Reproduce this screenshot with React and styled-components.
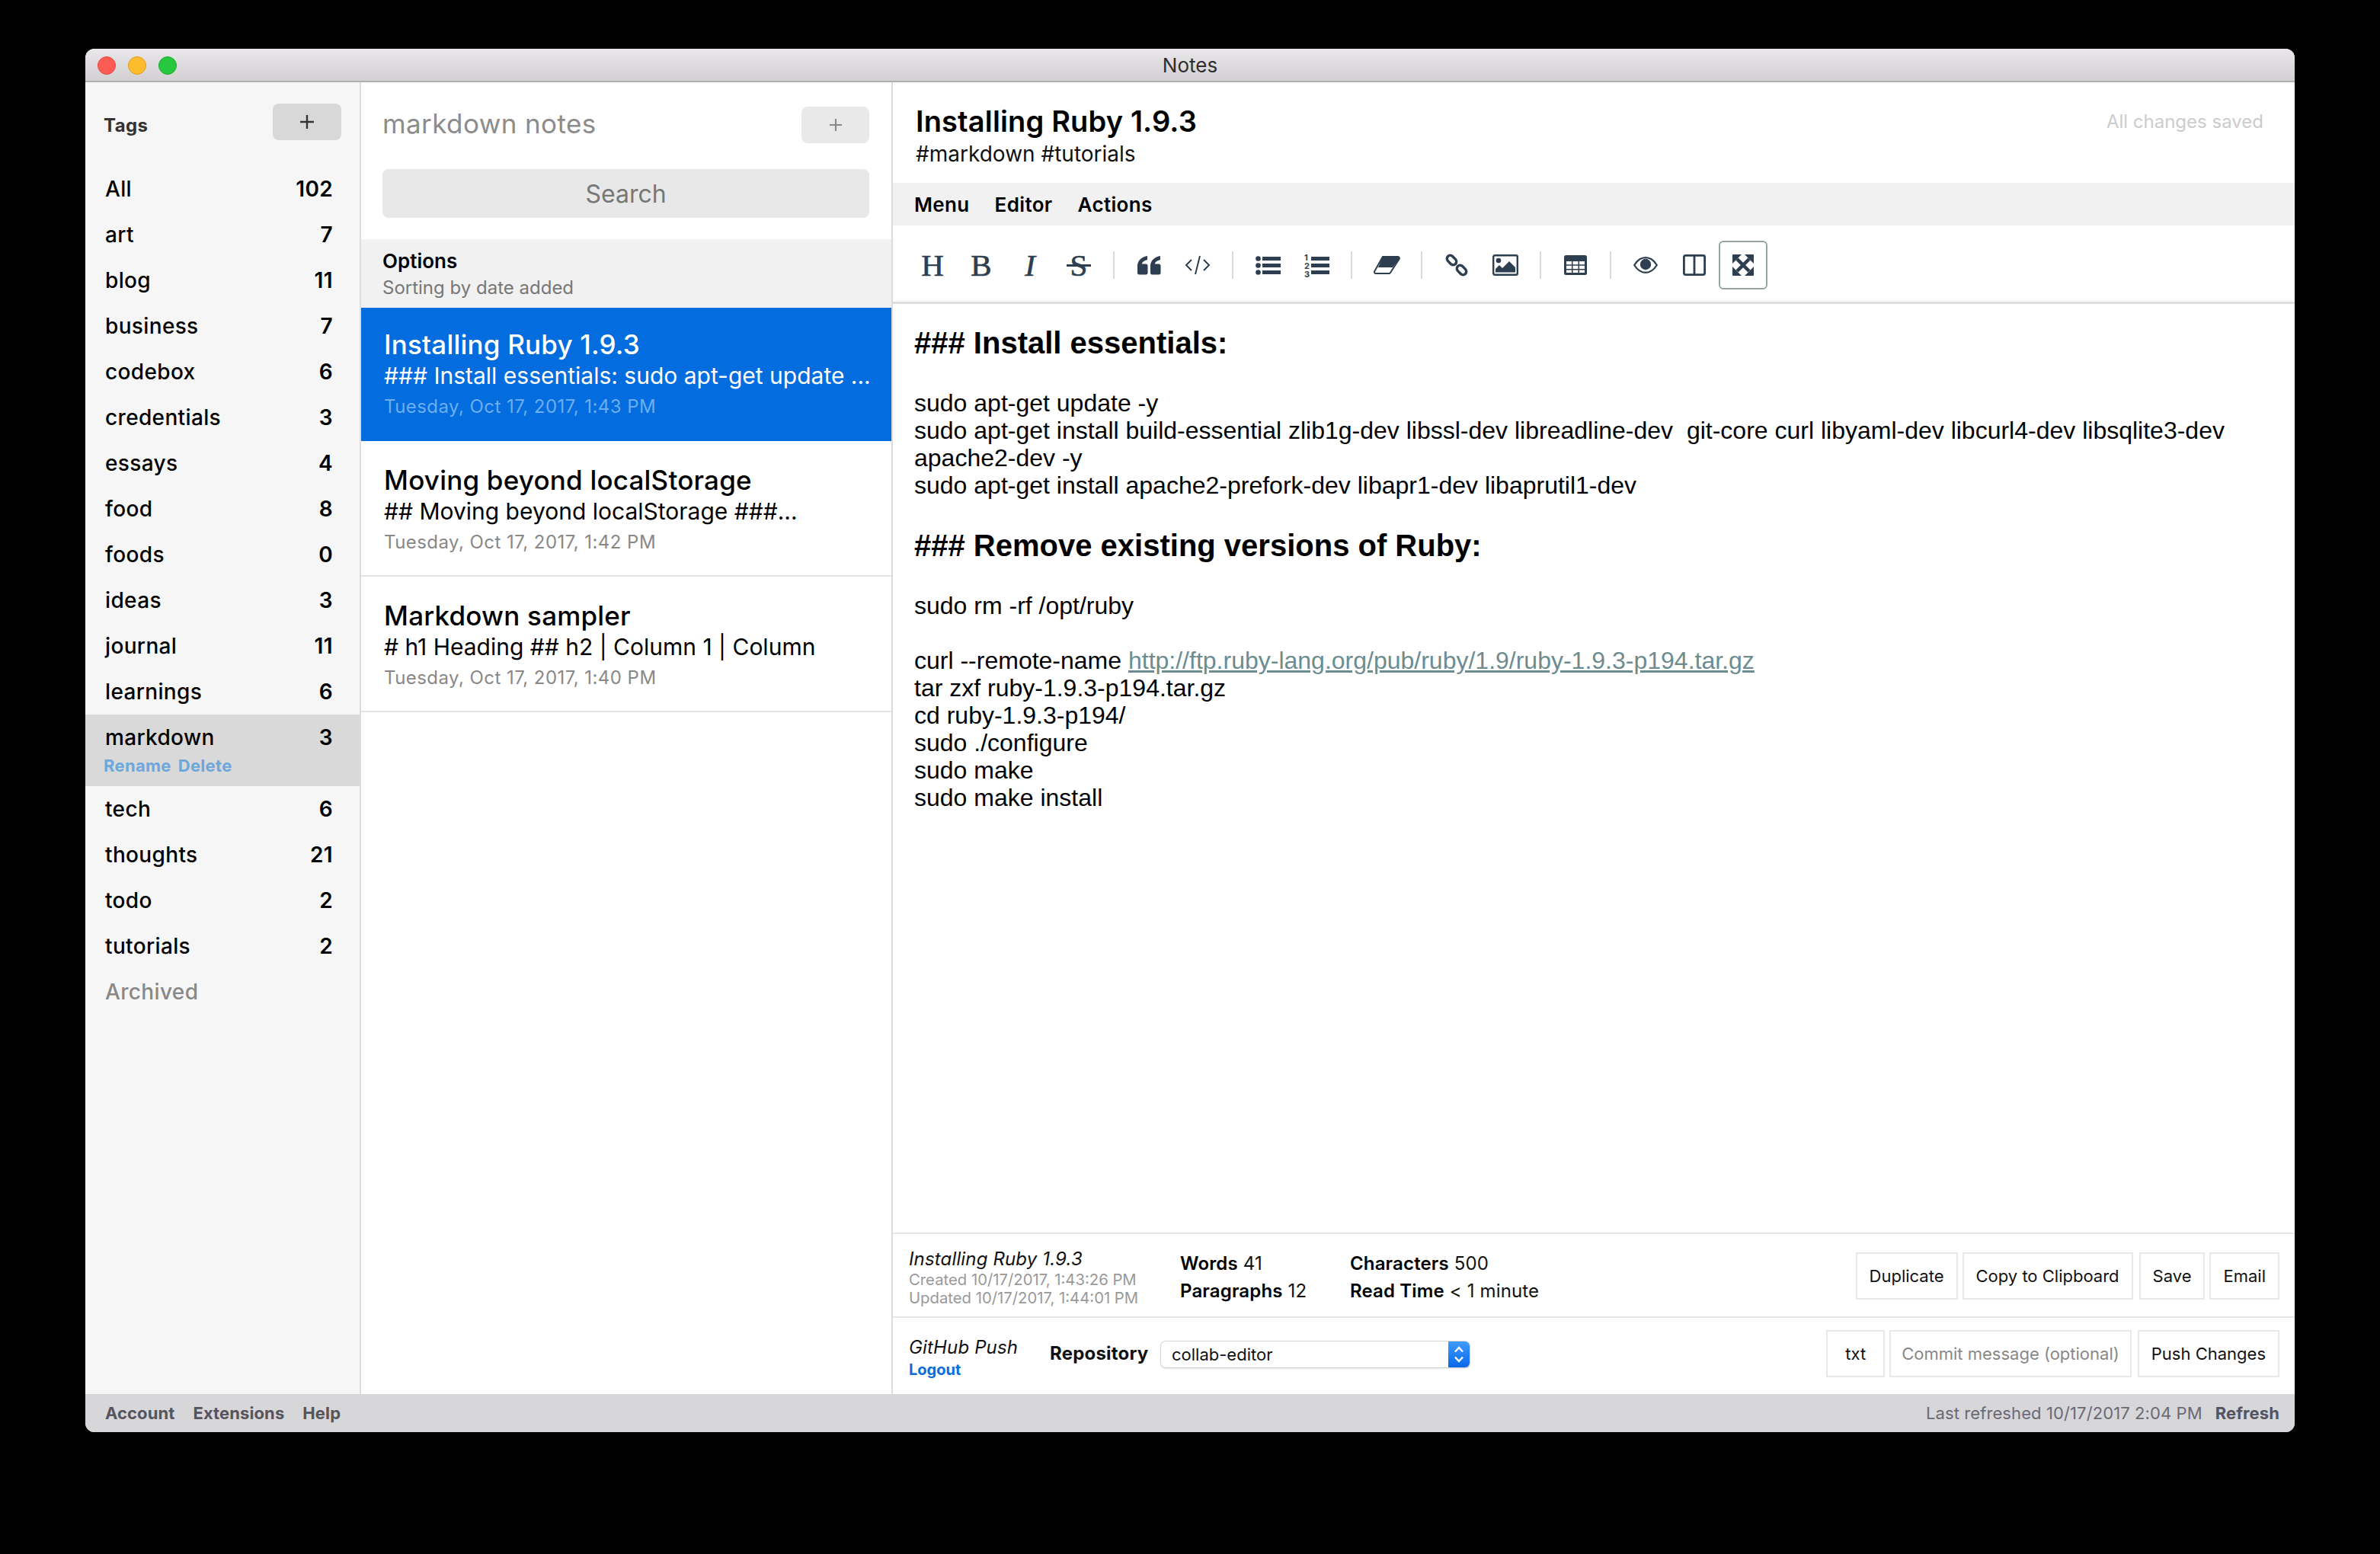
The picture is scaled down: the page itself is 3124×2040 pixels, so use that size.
import React from "react";
import styled, { createGlobalStyle } from "styled-components";

const GlobalStyle = createGlobalStyle`
  html, body {
    margin: 0;
    padding: 0;
    background: #000;
  }
  * {
    box-sizing: border-box;
  }
`;

const SANS = `Inter, "Noto Sans", sans-serif`;
const ICON = "#2c3e50";

const Page = styled.div`
  width: 3124px;
  height: 2040px;
  padding: 64px 112px 160px;
  background: #000;
  font-family: ${SANS};
`;
const Window = styled.div`
  height: 1816px;
  display: flex;
  flex-direction: column;
  border-radius: 12px;
  overflow: hidden;
  background: #fff;
`;
const TitleBar = styled.div`
  position: relative;
  flex: 0 0 44px;
  display: flex;
  align-items: center;
  justify-content: center;
  background: linear-gradient(#e9e7e9, #d2d0d2);
  border-bottom: 2px solid #b2afb2;
  font-size: 26px;
  color: #2e2e2e;
`;
const Lights = styled.div`
  position: absolute;
  left: 16px;
  top: 10px;
  display: flex;
  gap: 16px;
`;
const Light = styled.span`
  width: 24px;
  height: 24px;
  border-radius: 50%;
  background: ${(p) => p.$color};
  border: 1px solid ${(p) => p.$edge};
`;
const Columns = styled.div`
  flex: 1;
  display: flex;
  min-height: 0;
`;

/* tags column */
const Sidebar = styled.div`
  flex: 0 0 362px;
  background: #f6f6f6;
  border-right: 2px solid #dcdcdc;
`;
const SidebarHead = styled.div`
  height: 110px;
  padding: 28px 24px 0 24px;
  display: flex;
  justify-content: space-between;
  align-items: flex-start;
`;
const TagsLabel = styled.div`
  margin-top: 14px;
  font-size: 24px;
  font-weight: 700;
  letter-spacing: 0.4px;
  color: #333;
`;
const AddButton = styled.div`
  width: ${(p) => (p.$light ? "89px" : "90px")};
  height: 48px;
  border-radius: 8px;
  display: flex;
  align-items: center;
  justify-content: center;
  background: ${(p) => (p.$light ? "#e9e9e9" : "#d8d8d8")};
  color: ${(p) => (p.$light ? "#888" : "#333")};
`;
const Tag = styled.div`
  padding: 0 35px 0 26px;
  height: ${(p) => (p.$selected ? "94px" : "60px")};
  background: ${(p) => (p.$selected ? "#d9d9d9" : "transparent")};
`;
const TagRow = styled.div`
  height: 60px;
  display: flex;
  justify-content: space-between;
  align-items: center;
  font-size: 28px;
  font-weight: 500;
  letter-spacing: 0.35px;
  color: ${(p) => (p.$muted ? "#888" : "#000")};
`;
const TagActions = styled.div`
  margin: -6px 0 0 -2px;
  display: flex;
  gap: 9px;
  font-size: 22px;
  font-weight: 700;
  color: #6ea7dc;
  letter-spacing: 0.3px;
`;
const Count = styled.span`
  font-weight: 600;
`;

/* notes column */
const NotesPane = styled.div`
  flex: 0 0 698px;
  border-right: 2px solid #dcdcdc;
  display: flex;
  flex-direction: column;
`;
const NotesHead = styled.div`
  height: 80px;
  padding: 32px 29px 0 28px;
  display: flex;
  justify-content: space-between;
  align-items: flex-start;
`;
const NotesTitle = styled.div`
  font-size: 35px;
  line-height: 44px;
  letter-spacing: 0.4px;
  color: #8c8c8c;
`;
const SearchBox = styled.div`
  margin: 34px 29px 28px 28px;
  height: 64px;
  border-radius: 8px;
  background: #e8e8e8;
  display: flex;
  align-items: center;
  justify-content: center;
  font-size: 32px;
  color: #777;
`;
const OptionsBand = styled.div`
  height: 90px;
  padding: 13px 28px 0;
  background: #f1f1f1;
`;
const OptionsTitle = styled.div`
  font-size: 26px;
  line-height: 32px;
  font-weight: 600;
  color: #000;
`;
const OptionsHint = styled.div`
  font-size: 24px;
  line-height: 38px;
  color: #777;
`;
const Note = styled.div`
  height: ${(p) => (p.$active ? "175px" : "178px")};
  padding: ${(p) => (p.$active ? "27px" : "30px")} 16px 0 30px;
  background: ${(p) => (p.$active ? "#036cdf" : "#fff")};
  border-bottom: 2px solid ${(p) => (p.$active ? "#036cdf" : "#e4e4e4")};
`;
const NoteTitle = styled.div`
  font-size: 35px;
  line-height: 42px;
  font-weight: 500;
  letter-spacing: 0.2px;
  color: ${(p) => (p.$active ? "#fff" : "#000")};
`;
const NoteText = styled.div`
  font-size: 30px;
  line-height: 40px;
  white-space: nowrap;
  color: ${(p) => (p.$active ? "#fff" : "#000")};
`;
const NoteDate = styled.div`
  margin-top: 1px;
  font-size: 24px;
  line-height: 40px;
  letter-spacing: 0.45px;
  color: ${(p) => (p.$active ? "#6caef0" : "#888")};
`;

/* editor column */
const EditorPane = styled.div`
  flex: 1;
  min-width: 0;
  display: flex;
  flex-direction: column;
`;
const EditorHead = styled.div`
  height: 132px;
  padding: 26px 41px 0 30px;
  display: flex;
  justify-content: space-between;
  align-items: flex-start;
`;
const EditorTitle = styled.div`
  font-size: 38px;
  line-height: 50px;
  font-weight: 600;
  letter-spacing: 0.15px;
  color: #000;
`;
const EditorTags = styled.div`
  font-size: 28px;
  line-height: 36px;
  color: #111;
`;
const SavedLabel = styled.div`
  margin-top: 10px;
  font-size: 24px;
  line-height: 32px;
  color: #ccc;
`;
const MenuBar = styled.div`
  height: 56px;
  padding: 0 28px;
  display: flex;
  align-items: center;
  gap: 33px;
  background: #f1f1f1;
  font-size: 26px;
  font-weight: 600;
  letter-spacing: 0.35px;
  color: #000;
`;
const Toolbar = styled.div`
  height: 103px;
  padding: 20px 20px 0;
  display: flex;
  align-items: flex-start;
  border-bottom: 3px solid #dedede;
`;
const ToolButton = styled.div`
  position: relative;
  width: 64px;
  height: 64px;
  display: flex;
  align-items: center;
  justify-content: center;
  color: ${ICON};
  border: 2px solid ${(p) => (p.$on ? "#95a5a6" : "transparent")};
  border-radius: 6px;
`;
const ToolDivider = styled.div`
  width: 28px;
  height: 64px;
  display: flex;
  justify-content: center;
  align-items: center;
  &::after {
    content: "";
    width: 2px;
    height: 36px;
    background: #d9d9d9;
  }
`;
const SerifGlyph = styled.span`
  font-family: "Liberation Serif", serif;
  font-size: 41px;
  line-height: 1;
  font-weight: 400;
  font-style: ${(p) => (p.$italic ? "italic" : "normal")};
  -webkit-text-stroke: 0.7px ${ICON};
  color: ${ICON};
`;
const StrikeLine = styled.span`
  position: absolute;
  left: 14px;
  right: 14px;
  top: 29px;
  height: 3px;
  background: ${ICON};
`;
const Body = styled.div`
  flex: 1;
  padding: 33px 30px 0 28px;
  font-family: "Liberation Sans", Arial, sans-serif;
  font-size: 32px;
  line-height: 36px;
  color: #000;
`;
const BodyHeading = styled.div`
  font-size: 40px;
  font-weight: 700;
  margin-bottom: 43px;
  &:not(:first-child) {
    margin-top: 43px;
  }
`;
const BodyLine = styled.div`
  min-height: 36px;
  white-space: pre-wrap;
`;
const BodyLink = styled.span`
  color: #6d8c8f;
  text-decoration: underline;
`;
const InfoRow = styled.div`
  height: ${(p) => p.$height}px;
  border-top: 2px solid #e6e6e6;
  padding: ${(p) => p.$top}px 20px 0 21px;
  display: flex;
  align-items: flex-start;
`;
const MetaBlock = styled.div`
  width: 356px;
  padding-top: 6px;
`;
const MetaTitle = styled.div`
  font-size: 24px;
  line-height: 30px;
  font-style: italic;
  letter-spacing: 0.15px;
  color: #111;
`;
const MetaDate = styled.div`
  font-size: 20.3px;
  line-height: 24px;
  color: #999;
`;
const StatColumn = styled.div`
  width: ${(p) => p.$width}px;
  padding-top: 15px;
  display: flex;
  flex-direction: column;
  gap: 12px;
  font-size: 24px;
  line-height: 24px;
  letter-spacing: 0.15px;
  color: #111;
  b {
    font-weight: 600;
    color: #000;
  }
`;
const Actions = styled.div`
  margin-left: auto;
  display: flex;
  gap: 6px;
  padding-top: ${(p) => p.$top}px;
`;
const OutlineButton = styled.div`
  height: 62px;
  margin-left: ${(p) => p.$offset || 0}px;
  padding: 0 ${(p) => p.$pad || 16}px;
  border: 2px solid #e8e8e8;
  display: flex;
  align-items: center;
  font-size: 22px;
  color: ${(p) => (p.$muted ? "#888" : "#111")};
`;
const PushBlock = styled.div`
  width: 185px;
  padding-top: 10px;
`;
const LogoutLink = styled.div`
  margin-top: 2px;
  font-size: 20px;
  line-height: 24px;
  font-weight: 700;
  color: #0a6dd8;
`;
const RepoLabel = styled.div`
  width: 146px;
  margin-top: 18px;
  font-size: 24px;
  line-height: 30px;
  font-weight: 700;
  letter-spacing: 0.2px;
  color: #111;
`;
const SelectBox = styled.div`
  margin-top: 17px;
  width: 405px;
  height: 34px;
  display: flex;
  align-items: center;
  justify-content: space-between;
  padding-left: 14px;
  border-radius: 6px;
  background: #fff;
  box-shadow: 0 0 0 1px #d5d5d5, 0 1px 2px rgba(0, 0, 0, 0.3);
  font-size: 22px;
  color: #111;
  overflow: hidden;
`;
const SelectArrows = styled.div`
  width: 28px;
  height: 34px;
  display: flex;
  align-items: center;
  justify-content: center;
  background: linear-gradient(#3f9bfc, #0a68e8);
`;

/* status bar */
const StatusBar = styled.div`
  flex: 0 0 50px;
  padding: 0 20px 0 26px;
  display: flex;
  align-items: center;
  background: #d7d6d9;
  font-size: 22px;
  color: #55545f;
`;
const StatusLink = styled.span`
  font-weight: 700;
  margin-right: 24px;
  letter-spacing: 0.1px;
  &:last-child {
    margin-right: 0;
  }
`;
const StatusSpacer = styled.div`
  flex: 1;
`;
const Refreshed = styled.span`
  margin-right: 17px;
  letter-spacing: 0.1px;
  color: #6a6a76;
`;

const PlusIcon = ({ size = 20, weight = 2.4 }) => (
  <svg width={size} height={size} viewBox="0 0 20 20" fill="none" stroke="currentColor" strokeWidth={weight}>
    <path d="M10 1v18M1 10h18" />
  </svg>
);

const QuoteIcon = () => (
  <svg width="32" height="26" viewBox="0 0 32 26" fill={ICON}>
    <path d="M14 1C7 2 1 7 1 14v9a2.500 2.500 0 0 0 2.500 2.500h8.500a2.500 2.500 0 0 0 2.500-2.500v-9a2.500 2.500 0 0 0-2.500-2.500H7C7 9 10 7 14 6Z" />
    <path d="M31 1c-7 1-13 6-13 13v9a2.500 2.500 0 0 0 2.500 2.500H29a2.500 2.500 0 0 0 2.500-2.500v-9a2.500 2.500 0 0 0-2.500-2.500h-5c0-2.500 3-4.500 7-5.500Z" />
  </svg>
);
const CodeIcon = () => (
  <svg width="34" height="26" viewBox="0 0 34 26" fill="none" stroke={ICON} strokeWidth="2">
    <path d="M9 6 2 13l7 7M25 6l7 7-7 7M20 1l-6 24" />
  </svg>
);
const ListIcon = () => (
  <svg width="33" height="25" viewBox="0 0 33 25" fill={ICON}>
    <circle cx="3.500" cy="3.500" r="3.300" />
    <circle cx="3.500" cy="12.500" r="3.300" />
    <circle cx="3.500" cy="21.500" r="3.300" />
    <rect x="9" y="1" width="24" height="5" />
    <rect x="9" y="10" width="24" height="5" />
    <rect x="9" y="19" width="24" height="5" />
  </svg>
);
const OrderedIcon = () => (
  <svg width="33" height="33" viewBox="0 0 33 33" fill={ICON}>
    <text x="0" y="10" fontSize="11" fontWeight="700" fontFamily="Inter">1</text>
    <text x="0" y="21" fontSize="11" fontWeight="700" fontFamily="Inter">2</text>
    <text x="0" y="32" fontSize="11" fontWeight="700" fontFamily="Inter">3</text>
    <rect x="9" y="5" width="24" height="5" />
    <rect x="9" y="14" width="24" height="5" />
    <rect x="9" y="23" width="24" height="5" />
  </svg>
);
const EraserIcon = () => (
  <svg width="35" height="24" viewBox="0 0 35 24">
    <path d="M12 1h20a2 2 0 0 1 1.600 3L22 22a2 2 0 0 1-1.500 1H3a2 2 0 0 1-1.700-3Z" fill="#fff" stroke={ICON} strokeWidth="2" />
    <path d="M12 1h20a2 2 0 0 1 1.600 3L25 15H6Z" fill={ICON} />
  </svg>
);
const LinkIcon = () => (
  <svg width="30" height="30" viewBox="0 0 30 30" fill="none" stroke={ICON} strokeWidth="3.400">
    <rect x="1.500" y="4.200" width="14" height="8.600" rx="4.300" transform="rotate(45 8.500 8.500)" />
    <rect x="14.500" y="17.200" width="14" height="8.600" rx="4.300" transform="rotate(45 21.500 21.500)" />
  </svg>
);
const ImageIcon = () => (
  <svg width="34" height="28" viewBox="0 0 34 28">
    <rect x="1.200" y="1.200" width="31.600" height="25.600" rx="2" fill="none" stroke={ICON} strokeWidth="2.400" />
    <circle cx="8" cy="8" r="3.300" fill={ICON} />
    <path d="M4 23.500V19l5-5 4 4 9-9 8 8v6.500Z" fill={ICON} />
  </svg>
);
const TableIcon = () => (
  <svg width="30" height="26" viewBox="0 0 30 26">
    <rect width="30" height="26" rx="2.500" fill={ICON} />
    <path d="M3 8h7v4.200H3zM11.500 8h7v4.200h-7zM20 8h7v4.200h-7zM3 13.700h7v4.200H3zM11.500 13.700h7v4.200h-7zM20 13.700h7v4.200h-7zM3 19.400h7V23H3zM11.500 19.400h7V23h-7zM20 19.400h7V23h-7z" fill="#fff" />
  </svg>
);
const EyeIcon = () => (
  <svg width="32" height="22" viewBox="0 0 32 22">
    <path d="M1.200 11C5 5 10 1.200 16 1.200S27 5 30.800 11C27 17 22 20.800 16 20.800S5 17 1.200 11Z" fill="#fff" stroke={ICON} strokeWidth="2.200" />
    <circle cx="16" cy="10" r="7.200" fill={ICON} />
  </svg>
);
const ColumnsIcon = () => (
  <svg width="30" height="28" viewBox="0 0 30 28" fill="none" stroke={ICON} strokeWidth="2.800">
    <rect x="1.400" y="1.400" width="27.200" height="25.200" rx="2" />
    <path d="M15 1v26" />
  </svg>
);
const ExpandIcon = () => (
  <svg width="28" height="28" viewBox="0 0 28 28" fill={ICON}>
    <path d="M0 1a1 1 0 0 1 1-1h11L0 12ZM28 1a1 1 0 0 0-1-1H16l12 12ZM0 27a1 1 0 0 0 1 1h11L0 16ZM28 27a1 1 0 0 1-1 1H16l12-12Z" />
    <path d="M6 6l16 16M22 6 6 22" stroke={ICON} strokeWidth="4.500" />
  </svg>
);
const UpDownIcon = () => (
  <svg width="14" height="24" viewBox="0 0 14 24" fill="none" stroke="#fff" strokeWidth="2.400">
    <path d="M2 8.500 7 3l5 5.500M2 15.500 7 21l5-5.500" />
  </svg>
);

const tags = [
  ["All", 102], ["art", 7], ["blog", 11], ["business", 7], ["codebox", 6], ["credentials", 3],
  ["essays", 4], ["food", 8], ["foods", 0], ["ideas", 3], ["journal", 11], ["learnings", 6],
  ["markdown", 3], ["tech", 6], ["thoughts", 21], ["todo", 2], ["tutorials", 2],
];

const notes = [
  { title: "Installing Ruby 1.9.3", text: "### Install essentials: sudo apt-get update ...", date: "Tuesday, Oct 17, 2017, 1:43 PM", active: true },
  { title: "Moving beyond localStorage", text: "## Moving beyond localStorage ###...", date: "Tuesday, Oct 17, 2017, 1:42 PM" },
  { title: "Markdown sampler", text: "# h1 Heading ## h2 | Column 1 | Column", date: "Tuesday, Oct 17, 2017, 1:40 PM" },
];

const tools = [
  [<SerifGlyph key="h">H</SerifGlyph>, <SerifGlyph key="b">B</SerifGlyph>, <SerifGlyph key="i" $italic>I</SerifGlyph>,
    <React.Fragment key="s"><SerifGlyph>S</SerifGlyph><StrikeLine /></React.Fragment>],
  [<QuoteIcon key="q" />, <CodeIcon key="c" />],
  [<ListIcon key="u" />, <OrderedIcon key="o" />],
  [<EraserIcon key="e" />],
  [<LinkIcon key="l" />, <ImageIcon key="p" />],
  [<TableIcon key="t" />],
];

function TagList() {
  return tags.map(([name, count]) => (
    <Tag key={name} $selected={name === "markdown"}>
      <TagRow>
        <span>{name}</span>
        <Count>{count}</Count>
      </TagRow>
      {name === "markdown" && (
        <TagActions>
          <span>Rename</span>
          <span>Delete</span>
        </TagActions>
      )}
    </Tag>
  ));
}

function EditorToolbar() {
  return (
    <Toolbar>
      {tools.map((group, i) => (
        <React.Fragment key={i}>
          {i > 0 && <ToolDivider />}
          {group.map((icon, j) => (
            <ToolButton key={j}>{icon}</ToolButton>
          ))}
        </React.Fragment>
      ))}
      <ToolDivider />
      <ToolButton><EyeIcon /></ToolButton>
      <ToolButton><ColumnsIcon /></ToolButton>
      <ToolButton $on><ExpandIcon /></ToolButton>
    </Toolbar>
  );
}

export default function App() {
  return (
    <Page>
      <GlobalStyle />
      <Window>
        <TitleBar>
          <Lights>
            <Light $color="#fd5c55" $edge="#e2463f" />
            <Light $color="#fdbb2e" $edge="#e09e1f" />
            <Light $color="#27c73f" $edge="#1aab2a" />
          </Lights>
          Notes
        </TitleBar>
        <Columns>
          <Sidebar>
            <SidebarHead>
              <TagsLabel>Tags</TagsLabel>
              <AddButton><PlusIcon /></AddButton>
            </SidebarHead>
            <TagList />
            <Tag>
              <TagRow $muted><span>Archived</span></TagRow>
            </Tag>
          </Sidebar>

          <NotesPane>
            <NotesHead>
              <NotesTitle>markdown notes</NotesTitle>
              <AddButton $light><PlusIcon size={18} /></AddButton>
            </NotesHead>
            <SearchBox>Search</SearchBox>
            <OptionsBand>
              <OptionsTitle>Options</OptionsTitle>
              <OptionsHint>Sorting by date added</OptionsHint>
            </OptionsBand>
            {notes.map((n) => (
              <Note key={n.title} $active={n.active}>
                <NoteTitle $active={n.active}>{n.title}</NoteTitle>
                <NoteText $active={n.active}>{n.text}</NoteText>
                <NoteDate $active={n.active}>{n.date}</NoteDate>
              </Note>
            ))}
          </NotesPane>

          <EditorPane>
            <EditorHead>
              <div>
                <EditorTitle>Installing Ruby 1.9.3</EditorTitle>
                <EditorTags>#markdown #tutorials</EditorTags>
              </div>
              <SavedLabel>All changes saved</SavedLabel>
            </EditorHead>
            <MenuBar>
              <span>Menu</span>
              <span>Editor</span>
              <span>Actions</span>
            </MenuBar>
            <EditorToolbar />
            <Body>
              <BodyHeading>### Install essentials:</BodyHeading>
              <BodyLine>sudo apt-get update -y</BodyLine>
              <BodyLine>sudo apt-get install build-essential zlib1g-dev libssl-dev libreadline-dev  git-core curl libyaml-dev libcurl4-dev libsqlite3-dev apache2-dev -y</BodyLine>
              <BodyLine>sudo apt-get install apache2-prefork-dev libapr1-dev libaprutil1-dev</BodyLine>
              <BodyHeading>### Remove existing versions of Ruby:</BodyHeading>
              <BodyLine>sudo rm -rf /opt/ruby</BodyLine>
              <BodyLine />
              <BodyLine>curl --remote-name <BodyLink>http://ftp.ruby-lang.org/pub/ruby/1.9/ruby-1.9.3-p194.tar.gz</BodyLink></BodyLine>
              <BodyLine>tar zxf ruby-1.9.3-p194.tar.gz</BodyLine>
              <BodyLine>cd ruby-1.9.3-p194/</BodyLine>
              <BodyLine>sudo ./configure</BodyLine>
              <BodyLine>sudo make</BodyLine>
              <BodyLine>sudo make install</BodyLine>
            </Body>
            <InfoRow $height={110} $top={12}>
              <MetaBlock>
                <MetaTitle>Installing Ruby 1.9.3</MetaTitle>
                <MetaDate>Created 10/17/2017, 1:43:26 PM</MetaDate>
                <MetaDate>Updated 10/17/2017, 1:44:01 PM</MetaDate>
              </MetaBlock>
              <StatColumn $width={223}>
                <span><b>Words</b> 41</span>
                <span><b>Paragraphs</b> 12</span>
              </StatColumn>
              <StatColumn $width={300}>
                <span><b>Characters</b> 500</span>
                <span><b>Read Time</b> &lt; 1 minute</span>
              </StatColumn>
              <Actions $top={12}>
                <OutlineButton>Duplicate</OutlineButton>
                <OutlineButton>Copy to Clipboard</OutlineButton>
                <OutlineButton $offset={2}>Save</OutlineButton>
                <OutlineButton>Email</OutlineButton>
              </Actions>
            </InfoRow>
            <InfoRow $height={102} $top={14}>
              <PushBlock>
                <MetaTitle>GitHub Push</MetaTitle>
                <LogoutLink>Logout</LogoutLink>
              </PushBlock>
              <RepoLabel>Repository</RepoLabel>
              <SelectBox>
                collab-editor
                <SelectArrows><UpDownIcon /></SelectArrows>
              </SelectBox>
              <Actions $top={2}>
                <OutlineButton $pad={23}>txt</OutlineButton>
                <OutlineButton $muted $pad={14}>Commit message (optional)</OutlineButton>
                <OutlineButton $offset={2}>Push Changes</OutlineButton>
              </Actions>
            </InfoRow>
          </EditorPane>
        </Columns>
        <StatusBar>
          <StatusLink>Account</StatusLink>
          <StatusLink>Extensions</StatusLink>
          <StatusLink>Help</StatusLink>
          <StatusSpacer />
          <Refreshed>Last refreshed 10/17/2017 2:04 PM</Refreshed>
          <StatusLink>Refresh</StatusLink>
        </StatusBar>
      </Window>
    </Page>
  );
}
